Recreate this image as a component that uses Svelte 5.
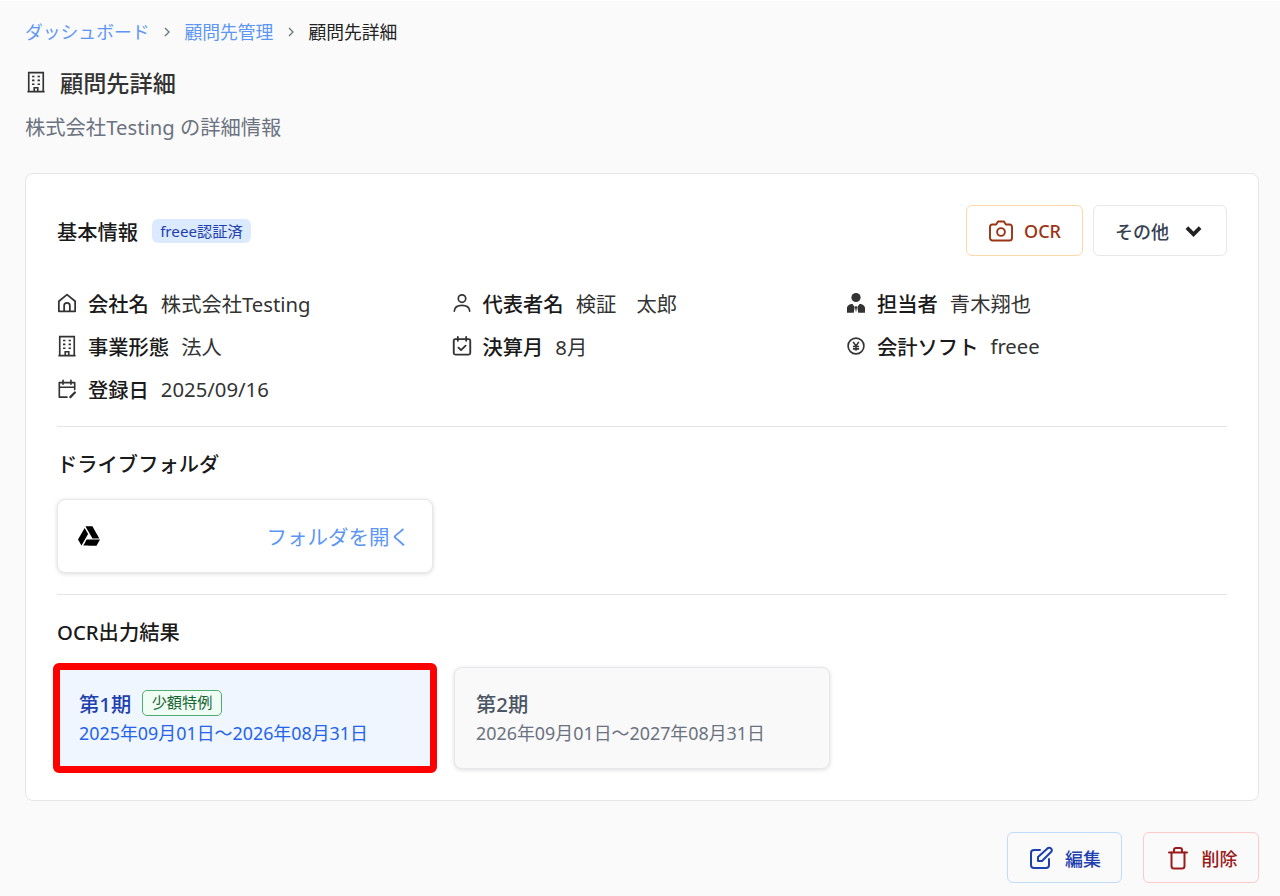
<script lang="ts">
  const info_rows = [
    { icon: "home", label: "会社名", value: "株式会社Testing" },
    { icon: "user", label: "代表者名", value: "検証　太郎" },
    { icon: "tie", label: "担当者", value: "青木翔也" },
    { icon: "building", label: "事業形態", value: "法人" },
    { icon: "check", label: "決算月", value: "8月" },
    { icon: "yen", label: "会計ソフト", value: "freee" },
    { icon: "edit_cal", label: "登録日", value: "2025/09/16" }
  ];

  const periods = [
    { name: "第1期", range: "2025年09月01日〜2026年08月31日", badge: "少額特例", active: true },
    { name: "第2期", range: "2026年09月01日〜2027年08月31日", badge: "", active: false }
  ];
</script>

{#snippet building()}
  <svg class="ico" viewBox="0 0 20 20" fill="none" stroke="currentColor" stroke-width="1.5">
    <path d="M2.200 18.800h15.600M3.400 18.800V1.500h13.200v17.300" />
    <path d="M6.400 5h2.200M11.400 5h2.200M6.400 8.500h2.200M11.400 8.500h2.200M6.400 12h2.200M11.400 12h2.200M8.400 18.600v-3.400h3.200v3.400" />
  </svg>
{/snippet}

{#snippet info_icon(name: string)}
  {#if name === "home"}
    <svg class="ico" viewBox="0 0 20 20" fill="none" stroke="currentColor" stroke-width="1.6" stroke-linejoin="round">
      <path d="M2.600 17.600V8.400L10 2.400l7.400 6v9.200z" />
      <path d="M7.400 17.400v-5a2.600 2.600 0 0 1 5.200 0v5" />
    </svg>
  {:else if name === "user"}
    <svg class="ico" viewBox="0 0 20 20" fill="none" stroke="currentColor" stroke-width="1.5" stroke-linecap="round">
      <circle cx="10" cy="6" r="3.400" />
      <path d="M3 17.400c.3-3.600 2.800-5.200 7-5.200s6.700 1.600 7 5.200" />
    </svg>
  {:else if name === "tie"}
    <svg class="ico" viewBox="0 0 20 20" fill="currentColor">
      <circle cx="10" cy="5" r="4.200" />
      <path d="M1.800 18.800v-3.900c0-2.400 2-3.900 5-4l2 2.800-.8 5.100zM18.200 18.800v-3.900c0-2.400-2-3.900-5-4l-2 2.800.8 5.100zM10 12.400l1 1.300-1 5-1-5z" />
    </svg>
  {:else if name === "building"}
    {@render building()}
  {:else if name === "check"}
    <svg class="ico" viewBox="0 0 20 20" fill="none" stroke="currentColor" stroke-width="1.700" stroke-linecap="round" stroke-linejoin="round">
      <rect x="2.500" y="3.800" width="15" height="14" rx="1.400" />
      <path d="M6.200 1.800v3.400M13.800 1.800v3.400M6.800 11.500l2.300 2.200 4.200-4" />
    </svg>
  {:else if name === "yen"}
    <svg class="ico" viewBox="0 0 20 20" fill="none" stroke="currentColor" stroke-width="1.500">
      <circle cx="10" cy="10" r="7.200" />
      <path d="M7.400 6.200 10 10l2.600-3.800M7.200 10.400h5.600M7.200 12.600h5.600M10 10v4.400" stroke-width="1.400" />
    </svg>
  {:else}
    <svg class="ico" viewBox="0 0 20 20" fill="none" stroke="currentColor" stroke-width="1.500" stroke-linecap="round" stroke-linejoin="round">
      <path d="M10 17.400H3V4.200h14v6.300M3 8.400h14M6.400 2v3.600M13.600 2v3.600" />
      <path d="M13 17.400l4.200-4.200" stroke-width="2" />
    </svg>
  {/if}
{/snippet}

<main class="page">
  <nav class="crumbs">
    <span class="crumb-link">ダッシュボード</span>
    <svg class="crumb-sep" viewBox="0 0 10 10" fill="none" stroke="currentColor" stroke-width="1.300"><path d="M3 1l4 4-4 4" /></svg>
    <span class="crumb-link">顧問先管理</span>
    <svg class="crumb-sep" viewBox="0 0 10 10" fill="none" stroke="currentColor" stroke-width="1.300"><path d="M3 1l4 4-4 4" /></svg>
    <span class="crumb-current">顧問先詳細</span>
  </nav>

  <header class="page-head">
    <h1 class="page-title">
      {@render building()}
      <span>顧問先詳細</span>
    </h1>
    <p class="page-sub">株式会社Testing の詳細情報</p>
  </header>

  <section class="card">
    <div class="card-head">
      <div class="card-title">
        <h2>基本情報</h2>
        <span class="auth-badge">freee認証済</span>
      </div>
      <div class="head-actions">
        <button class="btn btn-ocr">
          <svg class="btn-ico" viewBox="0 0 26 24" fill="none" stroke="currentColor" stroke-width="1.900" stroke-linejoin="round">
            <path d="M4 5.500h4.200L10 2.500h6l1.800 3H22a2.500 2.500 0 0 1 2 2.200v11.300a2.500 2.500 0 0 1-2.500 2.500h-17A2.500 2.500 0 0 1 2 19V8a2.500 2.500 0 0 1 2-2.500z" />
            <circle cx="13" cy="13" r="3.900" />
          </svg>
          OCR
        </button>
        <button class="btn btn-more">
          その他
          <svg class="chev" viewBox="0 0 18 12" fill="none" stroke="currentColor" stroke-width="4"><path d="M2 2.500l7 7 7-7" /></svg>
        </button>
      </div>
    </div>

    <div class="info-grid">
      {#each info_rows as row}
        <div class="info-item">
          {@render info_icon(row.icon)}
          <span class="info-label">{row.label}</span>
          <span class="info-value">{row.value}</span>
        </div>
      {/each}
    </div>

    <hr />

    <h2 class="section-title">ドライブフォルダ</h2>
    <div class="tile-row drive-row">
      <div class="tile drive">
        <svg class="drive-ico" viewBox="0 0 24 24" fill="currentColor">
          <path d="M12.010 1.485c-2.082 0-3.754.02-3.743.047.01.02 1.708 3.001 3.774 6.620l3.760 6.574h3.760c2.081 0 3.753-.02 3.742-.047-.005-.02-1.708-3.001-3.775-6.620l-3.760-6.574zm-4.760 1.730a789.828 789.861 0 0 0-3.630 6.319L0 15.868l1.890 3.298 1.885 3.297 3.620-6.335 3.618-6.330-1.880-3.287C8.100 4.704 7.255 3.220 7.250 3.214zm2.259 12.653-.203.348c-.114.198-.960 1.672-1.880 3.287a423.930 423.930 0 0 1-1.698 2.970c-.010.026 3.240.042 7.222.042h7.244l1.796-3.157c.992-1.734 1.850-3.230 1.906-3.323l.104-.167h-7.249z" />
        </svg>
        <span class="open-link">フォルダを開く</span>
      </div>
    </div>

    <hr />

    <h2 class="section-title">OCR出力結果</h2>
    <div class="tile-row">
      {#each periods as period}
        <div class="tile period" class:active={period.active}>
          <div class="period-top">
            <span class="period-name">{period.name}</span>
            {#if period.badge}
              <span class="period-badge">{period.badge}</span>
            {/if}
          </div>
          <div class="period-range">{period.range}</div>
        </div>
      {/each}
    </div>
  </section>

  <footer class="page-actions">
    <button class="btn btn-edit">
      <svg class="btn-ico" viewBox="0 0 24 24" fill="none" stroke="currentColor" stroke-width="2" stroke-linecap="round" stroke-linejoin="round">
        <path d="M11 4H5a3 3 0 0 0-3 3v12a3 3 0 0 0 3 3h12a3 3 0 0 0 3-3v-6" />
        <path d="M9 15v-4L19 2a2.600 2.600 0 0 1 3.500 3.500L13 15z" />
      </svg>
      編集
    </button>
    <button class="btn btn-delete">
      <svg class="btn-ico" viewBox="0 0 24 24" fill="none" stroke="currentColor" stroke-width="2" stroke-linecap="round" stroke-linejoin="round">
        <path d="M3 6.500h18M8 6.500V4a2 2 0 0 1 2-2h4a2 2 0 0 1 2 2v2.500" />
        <path d="M5.500 6.500V20a2.500 2.500 0 0 0 2.500 2.500h8a2.500 2.500 0 0 0 2.500-2.500V6.500" />
      </svg>
      削除
    </button>
  </footer>
</main>

<style>
  :global(body) {
    margin: 0;
    background: #fafafa;
    font-family: "Noto Sans CJK JP", "Noto Sans", sans-serif;
  }

  .page {
    box-sizing: border-box;
    height: 896px;
    overflow: hidden;
    padding: 20px 21px 0 25px;
    font-family: "Noto Sans", "Noto Sans CJK JP", sans-serif;
    border-top: 1px solid #fff;
  }

  .ico {
    width: 22px;
    height: 22px;
    flex-shrink: 0;
  }

  .crumbs {
    display: flex;
    align-items: center;
    height: 22px;
    font-size: 17.800px;
    line-height: 22px;
  }

  .crumb-link {
    color: #5c96f5;
  }

  .crumb-current {
    color: #222;
  }

  .crumb-sep {
    width: 10px;
    height: 10px;
    margin: 0 12px 0 13px;
    color: #6b7280;
  }

  .page-head {
    margin-top: 23px;
  }

  .page-title {
    display: flex;
    align-items: center;
    gap: 13px;
    margin: 0;
    height: 32px;
    font-size: 23.200px;
    font-weight: 500;
    color: #333;
  }

  .page-sub {
    margin: 14px 0 0;
    height: 30px;
    font-size: 20.300px;
    line-height: 30px;
    color: #6b7280;
  }

  .card {
    margin-top: 31px;
    box-sizing: border-box;
    height: 628px;
    padding: 31px;
    background: #fff;
    border: 1px solid #e6e6e6;
    border-radius: 8px;
  }

  .card-head {
    display: flex;
    justify-content: space-between;
    align-items: center;
    height: 51px;
  }

  .card-title {
    display: flex;
    align-items: center;
    gap: 14px;
  }

  h2 {
    margin: 0;
    font-size: 20.300px;
    font-weight: 500;
    color: #1a1a1a;
  }

  .auth-badge {
    padding: 0 8px;
    height: 24px;
    line-height: 24px;
    border-radius: 6px;
    font-size: 15.200px;
    background: #dbeafe;
    color: #1e40af;
  }

  .head-actions {
    display: flex;
    gap: 10px;
  }

  .btn {
    display: flex;
    align-items: center;
    justify-content: center;
    box-sizing: border-box;
    height: 51px;
    background: #fff;
    border-radius: 6px;
    font-family: inherit;
    font-size: 18px;
    font-weight: 500;
    padding: 0;
  }

  .btn-ico {
    width: 26px;
    height: 24px;
  }

  .btn-ocr {
    width: 117px;
    gap: 10px;
    border: 1.500px solid #fed7aa;
    color: #9a3412;
  }

  .btn-more {
    width: 134px;
    gap: 16px;
    padding-right: 3px;
    border: 1.500px solid #e5e7eb;
    color: #374151;
  }

  .chev {
    width: 17px;
    height: 12px;
    color: #222;
  }

  .info-grid {
    display: grid;
    grid-template-columns: repeat(3, 1fr);
    margin: 32px 0 23px;
    row-gap: 14px;
    column-gap: 13.500px;
  }

  .info-item {
    display: flex;
    align-items: center;
    height: 29px;
    font-size: 20.300px;
    color: #333;
  }

  .info-item .ico {
    margin-left: -1px;
  }

  .info-label {
    margin: 0 12px 0 10px;
    font-weight: 500;
    color: #1a1a1a;
  }

  hr {
    margin: 0;
    border: 0;
    border-top: 1px solid #e3e3e3;
  }

  .section-title {
    margin-top: 21px;
    height: 32px;
    line-height: 32px;
  }

  .tile-row {
    display: flex;
    gap: 21px;
    margin-top: 19px;
  }

  .drive-row {
    margin-bottom: 21px;
  }

  .tile {
    box-sizing: border-box;
    width: 376px;
    border: 1px solid #e5e7eb;
    border-radius: 8px;
    box-shadow: 0 1px 4px rgba(0, 0, 0, 0.14);
  }

  .drive {
    display: flex;
    align-items: center;
    justify-content: space-between;
    height: 74px;
    padding: 0 22px 0 20px;
    background: #fff;
  }

  .drive-ico {
    width: 22px;
    height: 22px;
    color: #000;
  }

  .open-link {
    font-size: 20.500px;
    color: #5c96f5;
  }

  .period {
    height: 102px;
    padding: 21px 21px 23px;
    background: #f9f9f9;
    display: flex;
    flex-direction: column;
    justify-content: center;
  }

  .period.active {
    background: #eff6ff;
    border-radius: 2px;
    outline: 7px solid #f00;
    outline-offset: -3px;
  }

  .period-top {
    display: flex;
    align-items: center;
    gap: 11px;
    height: 30px;
  }

  .period-name {
    font-size: 20.300px;
    font-weight: 500;
    color: #4b5563;
  }

  .active .period-name {
    color: #1e40af;
  }

  .period-badge {
    box-sizing: border-box;
    height: 26px;
    padding: 0 8.500px;
    line-height: 23px;
    font-size: 15.200px;
    color: #166534;
    background: #f0fdf4;
    border: 1.500px solid #4ead6e;
    border-radius: 5px;
  }

  .period-range {
    margin-top: 2px;
    font-size: 17.900px;
    line-height: 26px;
    color: #6b7280;
  }

  .active .period-range {
    color: #2563eb;
  }

  .page-actions {
    display: flex;
    justify-content: flex-end;
    gap: 21px;
    margin-top: 31px;
  }

  .btn-edit {
    width: 115px;
    gap: 11px;
    border: 1.500px solid #bfdbfe;
    background: transparent;
    color: #1e40af;
  }

  .btn-delete {
    width: 116px;
    gap: 11px;
    border: 1.500px solid #fecaca;
    background: transparent;
    color: #991b1b;
  }
</style>
